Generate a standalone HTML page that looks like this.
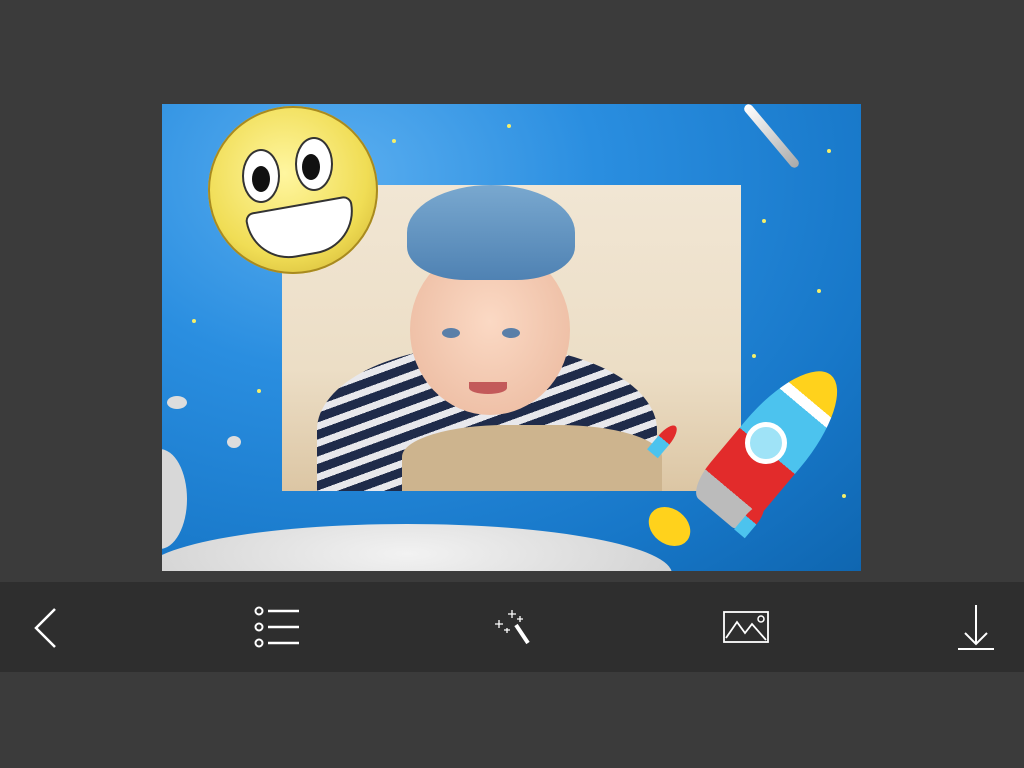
<!DOCTYPE html>
<html><head><style>
body{margin:0;width:1024px;height:768px;background:#3b3b3b;position:relative;overflow:hidden;font-family:"Liberation Sans",sans-serif}
.card{position:absolute;left:162px;top:104px;width:699px;height:467px;overflow:hidden;background:radial-gradient(ellipse at 25% 15%,#5aaef0 0%,#2a8ee0 35%,#1777c8 75%,#0f66b0 100%)}
.photo{position:absolute;left:120px;top:81px;width:459px;height:306px;background:linear-gradient(180deg,#f1e6d4 0%,#ecdec6 60%,#dcc6a4 100%);overflow:hidden}
.bar{position:absolute;left:0;top:582px;width:1024px;height:90px;background:#2e2e2e}
.s{position:absolute;width:4px;height:4px;border-radius:50%;background:#f5ef6a}
svg{position:absolute}
</style></head><body>
<div class="card">
 <div class="s" style="left:230px;top:35px"></div><div class="s" style="left:345px;top:20px"></div><div class="s" style="left:95px;top:285px"></div>
 <div class="s" style="left:655px;top:185px"></div><div class="s" style="left:590px;top:250px"></div><div class="s" style="left:665px;top:45px"></div>
 <div class="s" style="left:30px;top:215px"></div><div class="s" style="left:600px;top:115px"></div><div class="s" style="left:680px;top:390px"></div>
 <div class="photo">
  <div style="position:absolute;left:35px;top:160px;width:340px;height:170px;border-radius:50% 50% 0 0;background:repeating-linear-gradient(160deg,#1f2b4a 0 9px,#e8e8ec 9px 16px)"></div>
  <div style="position:absolute;left:120px;top:240px;width:260px;height:80px;border-radius:40% 40% 0 0;background:#cdb48e"></div>
  <div style="position:absolute;left:128px;top:60px;width:160px;height:170px;border-radius:50%;background:radial-gradient(ellipse at 50% 45%,#fbd9c4,#eab79c)"></div>
  <div style="position:absolute;left:125px;top:0px;width:168px;height:95px;border-radius:50% 50% 35% 35%;background:linear-gradient(#79a8cf,#4f82b3)"></div>
  <div style="position:absolute;left:160px;top:143px;width:18px;height:10px;border-radius:50%;background:#5a7fa8"></div>
  <div style="position:absolute;left:220px;top:143px;width:18px;height:10px;border-radius:50%;background:#5a7fa8"></div>
  <div style="position:absolute;left:187px;top:197px;width:38px;height:12px;border-radius:0 0 50% 50%;background:#c35a5a"></div>
 </div>
 <div style="position:absolute;left:46px;top:2px;width:170px;height:168px;border-radius:50%;background:radial-gradient(circle at 45% 40%,#fff6a0,#f0dd55 60%,#c8a92a);box-shadow:0 0 0 2px #a88a20 inset"></div>
 <div style="position:absolute;left:80px;top:45px;width:34px;height:50px;border-radius:50%;background:#fff;border:2px solid #333"></div>
 <div style="position:absolute;left:133px;top:33px;width:34px;height:50px;border-radius:50%;background:#fff;border:2px solid #333"></div>
 <div style="position:absolute;left:90px;top:62px;width:18px;height:26px;border-radius:50%;background:#111"></div>
 <div style="position:absolute;left:140px;top:50px;width:18px;height:26px;border-radius:50%;background:#111"></div>
 <div style="position:absolute;left:86px;top:100px;width:104px;height:48px;border-radius:10px 10px 50px 50px;background:#fff;border:2px solid #333;transform:rotate(-10deg)"></div>
 <!-- clouds -->
 <div style="position:absolute;left:-20px;top:420px;width:530px;height:100px;border-radius:50% 50% 0 0;background:radial-gradient(ellipse at 50% 30%,#f2f2f2,#c8c8c8)"></div>
 <div style="position:absolute;left:-30px;top:345px;width:55px;height:100px;border-radius:50%;background:#d8d8d8"></div>
 <div style="position:absolute;left:5px;top:292px;width:20px;height:13px;border-radius:50%;background:#ddd"></div>
 <div style="position:absolute;left:65px;top:332px;width:14px;height:12px;border-radius:50%;background:#ddd"></div>
 <!-- rocket -->
 <div style="position:absolute;left:575px;top:250px;width:72px;height:180px;border-radius:50% 50% 20% 20%;background:linear-gradient(180deg,#ffd21c 0 18%,#fff 18% 24%,#4cc3ee 24% 55%,#e22b2b 55% 85%,#bbb 85%);transform:rotate(40deg)"></div>
 <div style="position:absolute;left:583px;top:318px;width:32px;height:32px;border-radius:50%;background:#9fe3f7;border:5px solid #fff"></div>
 <div style="position:absolute;left:485px;top:405px;width:45px;height:35px;border-radius:50%;background:#ffd21c;transform:rotate(38deg)"></div>
 <div style="position:absolute;left:495px;top:318px;width:14px;height:36px;border-radius:50% 50% 0 0;background:linear-gradient(#e22b2b 50%,#4cc3ee 50%);transform:rotate(40deg)"></div>
 <div style="position:absolute;left:582px;top:398px;width:14px;height:36px;border-radius:50% 50% 0 0;background:linear-gradient(#e22b2b 50%,#4cc3ee 50%);transform:rotate(40deg)"></div>
 <div style="position:absolute;left:605px;top:-8px;width:9px;height:80px;background:linear-gradient(#fff,#aaa);transform:rotate(-40deg);border-radius:5px"></div>
</div>
<div class="bar"></div>
<svg width="1024" height="768" viewBox="0 0 1024 768" fill="none" stroke="#fff" stroke-width="2.5" style="left:0;top:0">
 <path d="M55 609 L36 628 L55 647"/>
 <circle cx="259" cy="611" r="3.5" stroke-width="2"/><circle cx="259" cy="627" r="3.5" stroke-width="2"/><circle cx="259" cy="643" r="3.5" stroke-width="2"/>
 <path d="M268 611H299M268 627H299M268 643H299"/>
 <path d="M516 625L528 643" stroke-width="4"/>
 <path d="M512 610v8M508 614h8M520 616v6M517 619h6M499 620v8M495 624h8M507 628v5M504 630h6" stroke-width="1.3"/>
 <rect x="724" y="612" width="44" height="30" stroke-width="1.8"/>
 <path d="M726 638L737 622L745 633L752 624L766 640" stroke-width="1.8"/><circle cx="761" cy="619" r="3" stroke-width="1.5"/>
 <path d="M976 605V644M965 633L976 644L987 633M958 649H994" stroke-width="2"/>
</svg>
</body></html>
